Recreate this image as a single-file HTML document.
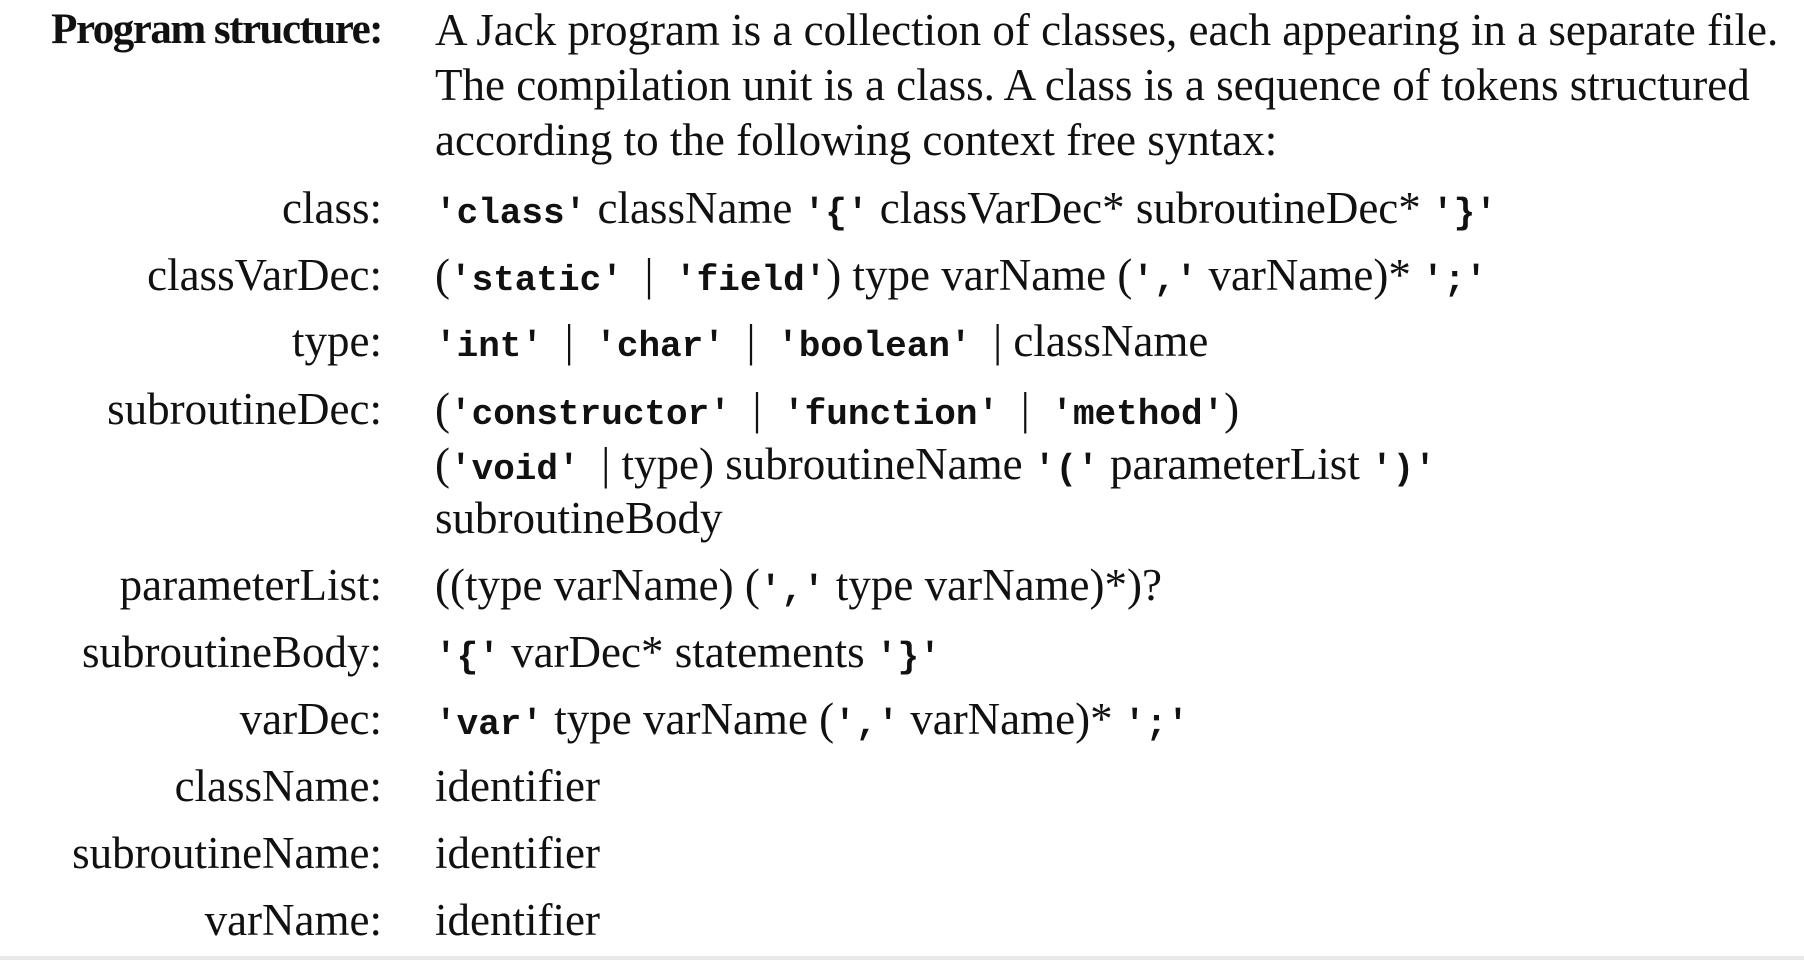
<!DOCTYPE html>
<html><head><meta charset="utf-8"><style>
html,body{margin:0;padding:0;background:#fff;width:1804px;height:960px;overflow:hidden;position:relative}
.r{position:absolute;font-family:"Liberation Serif",serif;font-size:45px;line-height:48px;color:#111;white-space:nowrap}
.l{right:1422px;text-align:right}
.c{left:435px}
.j{width:1325px;text-align:justify;text-align-last:justify}
.m{font-family:"Liberation Mono",monospace;font-weight:bold;font-size:36px;white-space:pre}
.h{font-weight:bold;letter-spacing:-1.5px;font-size:43px}
.bar{position:absolute;left:0;top:956px;width:1804px;height:4px;background:#e8e8e8}
</style></head><body>
<div class="r l h" style="top:6px">Program structure:</div>
<div class="r c j" style="top:6px">A Jack program is a collection of classes, each appearing in a separate file.</div>
<div class="r c j" style="top:61px;width:1310px">The compilation unit is a class. A class is a sequence of tokens structured</div>
<div class="r c" style="top:116px">according to the following context free syntax:</div>

<div class="r l" style="top:184px">class:</div>
<div class="r c" style="top:184px"><span class="m">'class'</span> className <span class="m">'{'</span> classVarDec* subroutineDec* <span class="m">'}'</span></div>

<div class="r l" style="top:251px">classVarDec:</div>
<div class="r c" style="top:251px">(<span class="m">'static' </span>|<span class="m"> 'field'</span>) type varName (<span class="m">','</span> varName)* <span class="m">';'</span></div>

<div class="r l" style="top:317px">type:</div>
<div class="r c" style="top:317px"><span class="m">'int' </span>|<span class="m"> 'char' </span>|<span class="m"> 'boolean' </span>| className</div>

<div class="r l" style="top:385px">subroutineDec:</div>
<div class="r c" style="top:385px">(<span class="m">'constructor' </span>|<span class="m"> 'function' </span>|<span class="m"> 'method'</span>)</div>
<div class="r c" style="top:440px">(<span class="m">'void' </span>| type) subroutineName <span class="m">'('</span> parameterList <span class="m">')'</span></div>
<div class="r c" style="top:494px">subroutineBody</div>

<div class="r l" style="top:561px">parameterList:</div>
<div class="r c" style="top:561px">((type varName) (<span class="m">','</span> type varName)*)?</div>

<div class="r l" style="top:628px">subroutineBody:</div>
<div class="r c" style="top:628px"><span class="m">'{'</span> varDec* statements <span class="m">'}'</span></div>

<div class="r l" style="top:695px">varDec:</div>
<div class="r c" style="top:695px"><span class="m">'var'</span> type varName (<span class="m">','</span> varName)* <span class="m">';'</span></div>

<div class="r l" style="top:762px">className:</div>
<div class="r c" style="top:762px">identifier</div>
<div class="r l" style="top:829px">subroutineName:</div>
<div class="r c" style="top:829px">identifier</div>
<div class="r l" style="top:896px">varName:</div>
<div class="r c" style="top:896px">identifier</div>
<div class="bar"></div>
</body></html>
